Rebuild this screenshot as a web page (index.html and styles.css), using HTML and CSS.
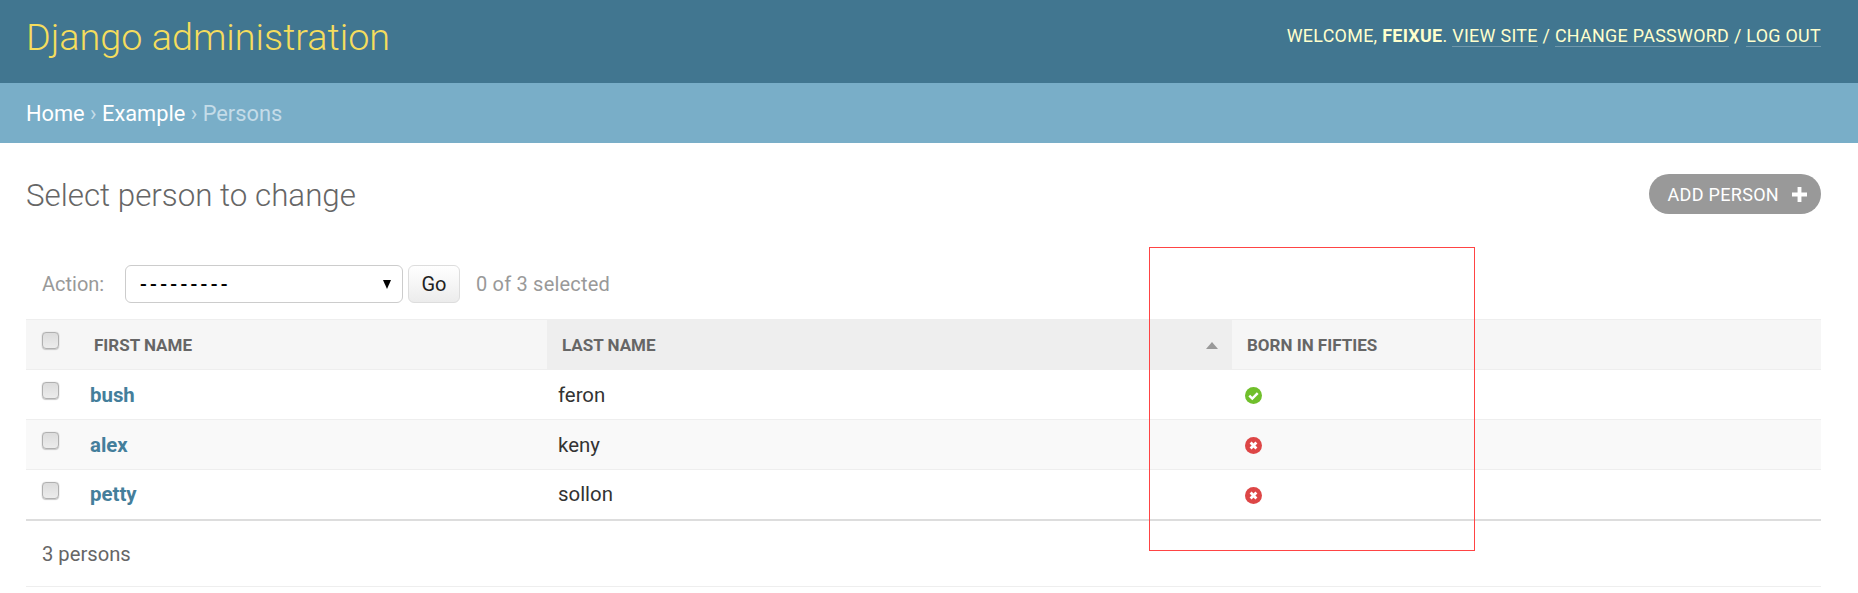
FILE: index.html
```html
<!DOCTYPE html>
<html lang="en">
<head>
<meta charset="utf-8">
<title>Select person to change | Django site admin</title>
<link rel="stylesheet" href="styles.css">
</head>
<body>
<header class="site-header">
  <h1 class="branding">Django administration</h1>
  <div class="user-tools">Welcome, <strong>feixue</strong>. <a href="#">View site</a> / <a href="#">Change password</a> / <a href="#">Log out</a></div>
</header>
<nav class="breadcrumbs"><a href="#">Home</a> <span class="sep">›</span> <a href="#">Example</a> <span class="sep">›</span> Persons</nav>
<main class="content">
  <div class="title-row">
    <h2 class="page-title">Select person to change</h2>
    <a class="add-btn" href="#">Add person
      <svg class="plus" viewBox="0 0 14 14" aria-hidden="true"><path d="M5.2 0h3.6v5.2H14v3.6H8.8V14H5.2V8.8H0V5.2h5.2z"/></svg>
    </a>
  </div>
  <div class="actions">
    <label class="action-label">Action:</label>
    <div class="select-box"><span class="select-value">---------</span><span class="select-arrow"></span></div>
    <button class="go-btn" type="button">Go</button>
    <span class="counter">0 of 3 selected</span>
  </div>
  <table class="results">
    <colgroup><col class="c-check"><col class="c-first"><col class="c-last"><col></colgroup>
    <thead>
      <tr>
        <th class="check-cell"><span class="check"></span></th>
        <th class="th-first">First name</th>
        <th class="th-last sorted"><span class="th-inner">Last name<span class="sort-arrow"></span></span></th>
        <th class="th-born">Born in fifties</th>
      </tr>
    </thead>
    <tbody>
      <tr>
        <td class="check-cell"><span class="check"></span></td>
        <td><a class="name-link" href="#">bush</a></td>
        <td class="last">feron</td>
        <td class="born"><svg class="bool" viewBox="0 0 17 17" aria-label="True"><circle cx="8.5" cy="8.5" r="8.5" fill="#70bf2b"/><path d="M4.3 8.6l3 3 5.4-5.4" fill="none" stroke="#fff" stroke-width="2.5"/></svg></td>
      </tr>
      <tr class="alt">
        <td class="check-cell"><span class="check"></span></td>
        <td><a class="name-link" href="#">alex</a></td>
        <td class="last">keny</td>
        <td class="born"><svg class="bool" viewBox="0 0 17 17" aria-label="False"><circle cx="8.5" cy="8.5" r="8.5" fill="#dd4646"/><path d="M5.6 5.6l5.8 5.8M11.4 5.6l-5.8 5.8" fill="none" stroke="#fff" stroke-width="2.8"/></svg></td>
      </tr>
      <tr>
        <td class="check-cell"><span class="check"></span></td>
        <td><a class="name-link" href="#">petty</a></td>
        <td class="last">sollon</td>
        <td class="born"><svg class="bool" viewBox="0 0 17 17" aria-label="False"><circle cx="8.5" cy="8.5" r="8.5" fill="#dd4646"/><path d="M5.6 5.6l5.8 5.8M11.4 5.6l-5.8 5.8" fill="none" stroke="#fff" stroke-width="2.8"/></svg></td>
      </tr>
    </tbody>
  </table>
  <p class="paginator">3 persons</p>
</main>
<div class="annotation"></div>
</body>
</html>
```
FILE: styles.css
```css
* { box-sizing: border-box; }
html, body { margin: 0; padding: 0; background: #fff; }
body { font-family: Roboto, "Liberation Sans", sans-serif; color: #333; height: 593px; overflow: hidden; position: relative; }
a { text-decoration: none; }

.site-header { height: 83px; background: #417690; display: flex; justify-content: space-between; padding: 0 37px 0 26px; color: #ffc; }
.branding { margin: 15px 0 0; font-size: 37.75px; font-weight: 300; line-height: 44px; color: #f5dd5d; }
.user-tools { margin-top: 25px; font-size: 17.9px; font-weight: 400; letter-spacing: .3px; line-height: 21px; text-transform: uppercase; }
.user-tools strong { font-weight: 700; }
.user-tools a { color: #ffc; border-bottom: 1px solid rgba(255,255,255,.25); }

.breadcrumbs { height: 60px; background: #79aec8; padding: 1px 26px 0; line-height: 60px; font-size: 21.8px; font-weight: 400; color: #c4dce8; }
.breadcrumbs a { color: #fff; font-weight: 400; }
.breadcrumbs .sep { color: #c4dce8; }

.content { padding: 0 37px 0 26px; }
.title-row { display: flex; justify-content: space-between; align-items: flex-start; height: 122px; padding-top: 31px; }
.page-title { margin: 4px 0 0; font-size: 31.3px; font-weight: 300; line-height: 36px; color: #666; }
.add-btn { display: flex; align-items: center; height: 40px; padding: 0 14px 0 19px; border-radius: 20px; background: #999; color: #fff; font-size: 18px; letter-spacing: .3px; text-transform: uppercase; }
.plus { width: 15px; height: 15px; margin-left: 13px; fill: #fff; }

.actions { display: flex; align-items: flex-start; height: 54px; padding-left: 16px; color: #999; font-size: 20px; line-height: 38px; font-weight: 400; }
.action-label { width: 83px; }
.select-box { width: 278px; height: 38px; border: 1px solid #ccc; border-radius: 6px; background: #fff; display: flex; align-items: center; justify-content: space-between; padding: 0 11px 0 14px; color: #000; font-size: 20px; }
.select-value { letter-spacing: 3.3px; font-weight: 500; }
.select-arrow { width: 0; height: 0; border-left: 4.5px solid transparent; border-right: 4.5px solid transparent; border-top: 9px solid #000; }
.go-btn { width: 52px; height: 38px; margin-left: 5px; border: 1px solid #ddd; border-radius: 6px; background: linear-gradient(#fff, #ececec); color: #222; font-family: inherit; font-size: 20px; padding: 0; }
.counter { margin-left: 16px; letter-spacing: .2px; }

.results { width: 100%; border-collapse: collapse; table-layout: fixed; margin-top: 0; }
.c-check { width: 64px; }
.c-first { width: 457px; }
.c-last { width: 685px; }
.results th { height: 50px; padding: 0; background: #f6f6f6; border-top: 1px solid #eee; border-bottom: 1px solid #eee; color: #666; font-size: 17px; font-weight: 700; text-align: left; text-transform: uppercase; }
.results th.sorted { background: #eee; }
.results td { height: 50px; padding: 0; border-bottom: 1px solid #eee; font-size: 20.4px; }
.results tbody tr:last-child td { border-bottom: 2px solid #ddd; }
.results tr.alt td { background: #f9f9f9; }
.th-first { padding-left: 4px !important; }
.th-last { padding-left: 15px !important; padding-right: 14px !important; }
.th-born { padding-left: 15px !important; }
.th-inner { display: flex; justify-content: space-between; align-items: center; }
.sort-arrow { width: 0; height: 0; margin-top: 2px; border-left: 6.5px solid transparent; border-right: 6.5px solid transparent; border-bottom: 7px solid #999; }
.check-cell { vertical-align: top; padding: 12px 0 0 16px !important; }
.check { display: block; width: 17px; height: 17px; border: 1px solid #b0b0b0; border-radius: 4px; background: linear-gradient(#dcdcdc, #ececec); box-shadow: 0 0 1px #aaa, 0 1px 1px #ccc; }
.name-link { color: #447e9b; font-weight: 700; }
.last { padding-left: 11px !important; }
.born { padding-left: 13px !important; }
.bool { display: block; width: 17px; height: 17px; margin-top: 2px; }

.paginator { margin: 0; height: 66px; border-bottom: 1px solid #eee; padding: 21px 0 0 16px; color: #666; font-size: 20.2px; line-height: 24px; }

.annotation { position: absolute; left: 1149px; top: 247px; width: 326px; height: 304px; border: 1px solid #f44; pointer-events: none; }
```
